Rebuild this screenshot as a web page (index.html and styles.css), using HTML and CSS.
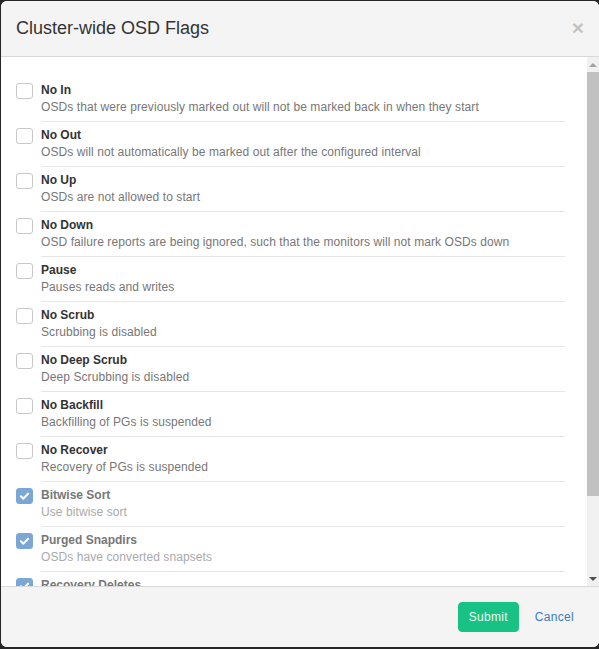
FILE: index.html
```html
<!DOCTYPE html>
<html lang="en">
<head>
<meta charset="utf-8">
<title>Cluster-wide OSD Flags</title>
<link rel="stylesheet" href="styles.css">
</head>
<body>
<div class="modal">
  <div class="modal-header">
    <h4 class="modal-title">Cluster-wide OSD Flags</h4>
    <button class="close" type="button" aria-label="Close">&times;</button>
  </div>
  <div class="modal-body">
    <div class="flag-list">
      <div class="flag">
        <span class="check"></span>
        <div class="flag-text">
          <div class="flag-name">No In</div>
          <div class="flag-desc">OSDs that were previously marked out will not be marked back in when they start</div>
        </div>
      </div>
      <div class="flag">
        <span class="check"></span>
        <div class="flag-text">
          <div class="flag-name">No Out</div>
          <div class="flag-desc">OSDs will not automatically be marked out after the configured interval</div>
        </div>
      </div>
      <div class="flag">
        <span class="check"></span>
        <div class="flag-text">
          <div class="flag-name">No Up</div>
          <div class="flag-desc">OSDs are not allowed to start</div>
        </div>
      </div>
      <div class="flag">
        <span class="check"></span>
        <div class="flag-text">
          <div class="flag-name">No Down</div>
          <div class="flag-desc">OSD failure reports are being ignored, such that the monitors will not mark OSDs down</div>
        </div>
      </div>
      <div class="flag">
        <span class="check"></span>
        <div class="flag-text">
          <div class="flag-name">Pause</div>
          <div class="flag-desc">Pauses reads and writes</div>
        </div>
      </div>
      <div class="flag">
        <span class="check"></span>
        <div class="flag-text">
          <div class="flag-name">No Scrub</div>
          <div class="flag-desc">Scrubbing is disabled</div>
        </div>
      </div>
      <div class="flag">
        <span class="check"></span>
        <div class="flag-text">
          <div class="flag-name">No Deep Scrub</div>
          <div class="flag-desc">Deep Scrubbing is disabled</div>
        </div>
      </div>
      <div class="flag">
        <span class="check"></span>
        <div class="flag-text">
          <div class="flag-name">No Backfill</div>
          <div class="flag-desc">Backfilling of PGs is suspended</div>
        </div>
      </div>
      <div class="flag">
        <span class="check"></span>
        <div class="flag-text">
          <div class="flag-name">No Recover</div>
          <div class="flag-desc">Recovery of PGs is suspended</div>
        </div>
      </div>
      <div class="flag is-disabled">
        <span class="check is-checked"><svg viewBox="0 0 16 16" width="16" height="16"><path d="M4.2 8.3l2.6 2.5 5-5.2" fill="none" stroke="#fff" stroke-width="2.3" stroke-linecap="round" stroke-linejoin="round"/></svg></span>
        <div class="flag-text">
          <div class="flag-name">Bitwise Sort</div>
          <div class="flag-desc">Use bitwise sort</div>
        </div>
      </div>
      <div class="flag is-disabled">
        <span class="check is-checked"><svg viewBox="0 0 16 16" width="16" height="16"><path d="M4.2 8.3l2.6 2.5 5-5.2" fill="none" stroke="#fff" stroke-width="2.3" stroke-linecap="round" stroke-linejoin="round"/></svg></span>
        <div class="flag-text">
          <div class="flag-name">Purged Snapdirs</div>
          <div class="flag-desc">OSDs have converted snapsets</div>
        </div>
      </div>
      <div class="flag is-disabled">
        <span class="check is-checked"><svg viewBox="0 0 16 16" width="16" height="16"><path d="M4.2 8.3l2.6 2.5 5-5.2" fill="none" stroke="#fff" stroke-width="2.3" stroke-linecap="round" stroke-linejoin="round"/></svg></span>
        <div class="flag-text">
          <div class="flag-name">Recovery Deletes</div>
          <div class="flag-desc">Deletes performed during recovery instead of peering</div>
        </div>
      </div>
    </div>
    <div class="scrollbar" aria-hidden="true">
      <span class="scroll-btn"><span class="arrow-up"></span></span>
      <span class="scroll-track"><span class="scroll-thumb"></span></span>
      <span class="scroll-btn"><span class="arrow-down"></span></span>
    </div>
  </div>
  <div class="modal-footer">
    <button class="btn btn-submit" type="button">Submit</button>
    <button class="btn btn-link" type="button">Cancel</button>
  </div>
</div>
</body>
</html>
```

FILE: styles.css
```css
html, body {
  margin: 0;
  padding: 0;
}

body {
  background: #262626;
  font-family: "Liberation Sans", Arial, sans-serif;
  font-size: 12px;
  color: #333;
  padding-top: 1px;
  padding-left: 1px;
}

.modal {
  width: 598px;
  height: 646px;
  background: #fff;
  border-radius: 6px;
  overflow: hidden;
  display: flex;
  flex-direction: column;
}

.modal-header {
  flex: none;
  display: flex;
  align-items: flex-start;
  justify-content: space-between;
  padding: 15px;
  background: #f4f4f4;
  border-bottom: 1px solid #d9d9d9;
}

.modal-title {
  margin: 0;
  font-size: 18px;
  font-weight: normal;
  line-height: 25px;
  color: #333;
}

.close {
  background: none;
  border: 0;
  padding: 0;
  margin-top: 1px;
  font-family: "Liberation Sans", Arial, sans-serif;
  font-size: 21px;
  font-weight: bold;
  line-height: 1;
  color: #000;
  opacity: 0.2;
  cursor: pointer;
}

.modal-body {
  flex: 1;
  min-height: 0;
  display: flex;
}

.flag-list {
  flex: 1;
  min-width: 0;
  overflow: hidden;
  padding: 20px 22px 0 15px;
}

.scrollbar {
  flex: none;
  width: 12px;
  display: flex;
  flex-direction: column;
  background: #f1f1f1;
}

.scroll-btn {
  flex: none;
  height: 15px;
  display: flex;
  align-items: center;
  justify-content: center;
}

.arrow-up {
  width: 0;
  height: 0;
  border-left: 4px solid transparent;
  border-right: 4px solid transparent;
  border-bottom: 4px solid #a3a3a3;
}

.arrow-down {
  width: 0;
  height: 0;
  border-left: 4px solid transparent;
  border-right: 4px solid transparent;
  border-top: 4px solid #505050;
}

.scroll-track {
  flex: 1;
  display: flex;
  flex-direction: column;
}

.scroll-thumb {
  height: 424px;
  background: #c1c1c1;
}

.flag {
  display: flex;
  align-items: flex-start;
}

.check {
  flex: none;
  box-sizing: border-box;
  width: 17px;
  height: 16px;
  margin-top: 6px;
  margin-right: 8px;
  border: 1px solid #c8c8c8;
  border-radius: 3px;
  background: #fff;
  display: flex;
  align-items: center;
  justify-content: center;
}

.check.is-checked {
  border-color: #7aa7d6;
  background: #7aa7d6;
}

.check svg {
  display: block;
}

.flag-text {
  flex: 1;
  padding: 5px 0 6px;
  border-bottom: 1px solid #e6e6e6;
  line-height: 16px;
}

.flag-name {
  font-weight: bold;
  color: #333;
}

.flag-desc {
  margin-top: 1px;
  color: #777;
  letter-spacing: 0.08px;
}

.flag.is-disabled .flag-name {
  color: #777;
}

.flag.is-disabled .flag-desc {
  color: #aaa;
}

.modal-footer {
  flex: none;
  display: flex;
  justify-content: flex-end;
  gap: 5px;
  padding: 15px 14px 15px 15px;
  background: #f4f4f4;
  border-top: 1px solid #d9d9d9;
}

.btn {
  font-family: "Liberation Sans", Arial, sans-serif;
  font-size: 12px;
  line-height: 18px;
  letter-spacing: 0.3px;
  padding: 5px 10px;
  border: 1px solid transparent;
  border-radius: 4px;
  cursor: pointer;
}

.btn-submit {
  background: #17c284;
  border-color: #17c284;
  color: #eafaf3;
}

.btn-link {
  background: transparent;
  color: #3b7bbf;
}
```
